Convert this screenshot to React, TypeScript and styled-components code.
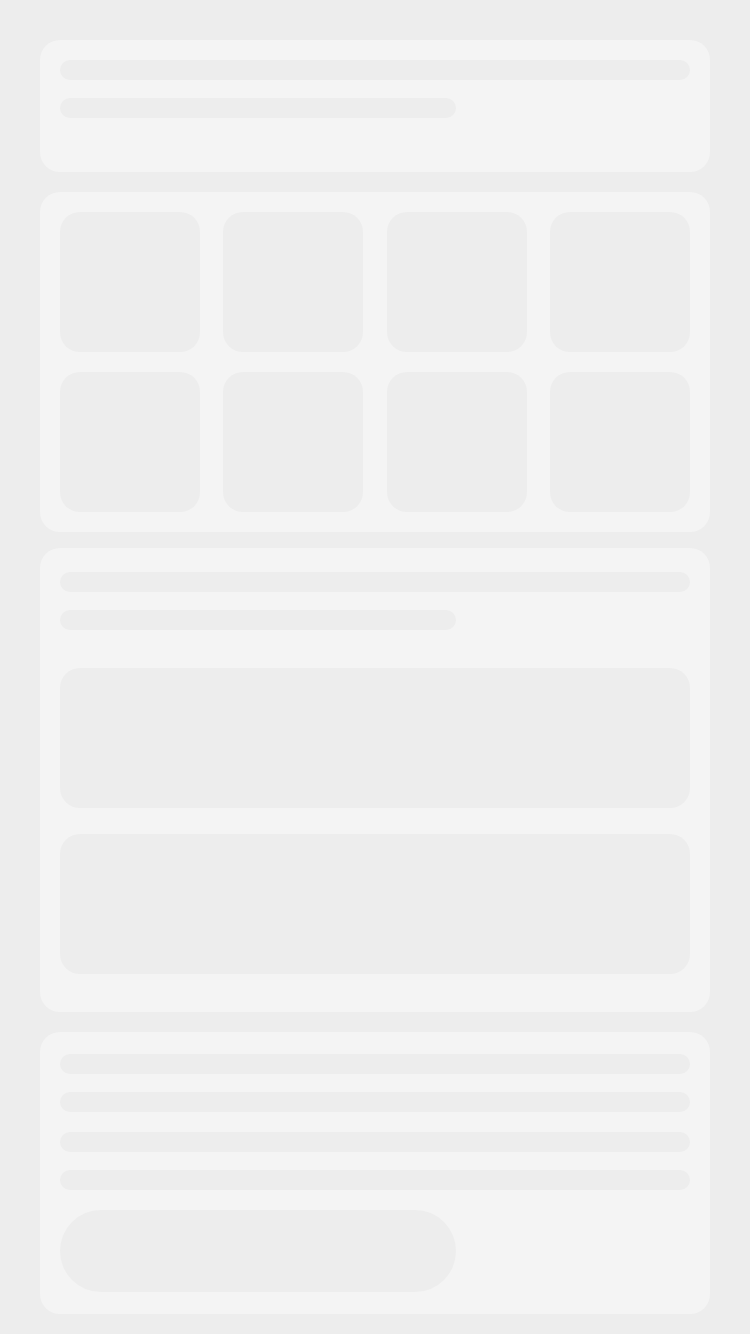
import React from "react";
import styled, { createGlobalStyle } from "styled-components";

const Global = createGlobalStyle`
  html, body { margin: 0; padding: 0; background: #ededed; }
  body { font-family: "Liberation Sans", Arial, sans-serif; }
`;

const Page = styled.main`
  box-sizing: border-box;
  min-height: 100vh;
  padding: 40px 40px 20px;
  display: flex;
  flex-direction: column;
`;

const Card = styled.section<{ $pt: number; $pb: number; $mb?: number }>`
  background: #f4f4f4;
  border-radius: 20px;
  padding: ${(p) => p.$pt}px 20px ${(p) => p.$pb}px;
  margin-bottom: ${(p) => p.$mb ?? 0}px;
  display: flex;
  flex-direction: column;
  align-items: flex-start;
`;

const Line = styled.div<{ $w?: string; $mb?: number }>`
  width: ${(p) => p.$w ?? "100%"};
  height: 20px;
  border-radius: 10px;
  background: #ededed;
  margin-bottom: ${(p) => p.$mb ?? 0}px;
`;

const Grid = styled.div`
  width: 100%;
  display: grid;
  grid-template-columns: repeat(4, 140px);
  justify-content: space-between;
  row-gap: 20px;
`;

const Tile = styled.div`
  height: 140px;
  border-radius: 20px;
  background: #ededed;
`;

const Block = styled.div<{ $mb?: number }>`
  width: 100%;
  height: 140px;
  border-radius: 20px;
  background: #ededed;
  margin-bottom: ${(p) => p.$mb ?? 0}px;
`;

const Pill = styled.div`
  width: 396px;
  height: 82px;
  border-radius: 41px;
  background: #ededed;
`;

export default function App() {
  return (
    <>
      <Global />
      <Page>
        <Card $pt={20} $pb={54} $mb={20}>
          <Line $mb={18} />
          <Line $w="396px" />
        </Card>
        <Card $pt={20} $pb={20} $mb={16}>
          <Grid>
            {Array.from({ length: 8 }).map((_, i) => (
              <Tile key={i} />
            ))}
          </Grid>
        </Card>
        <Card $pt={24} $pb={38} $mb={20}>
          <Line $mb={18} />
          <Line $w="396px" $mb={38} />
          <Block $mb={26} />
          <Block />
        </Card>
        <Card $pt={22} $pb={22}>
          <Line $mb={18} />
          <Line $mb={20} />
          <Line $mb={18} />
          <Line $mb={20} />
          <Pill />
        </Card>
      </Page>
    </>
  );
}
